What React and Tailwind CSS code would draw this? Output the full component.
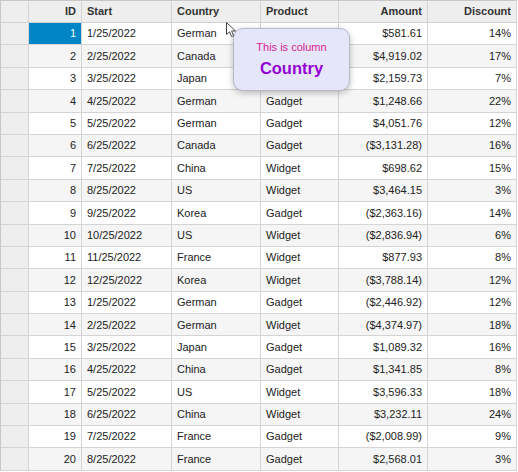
import React from "react";

// product is hidden under the tooltip for the first three rows
const rows = [
  [1, "1/25/2022", "German", "", "$581.61", "14%"],
  [2, "2/25/2022", "Canada", "", "$4,919.02", "17%"],
  [3, "3/25/2022", "Japan", "", "$2,159.73", "7%"],
  [4, "4/25/2022", "German", "Gadget", "$1,248.66", "22%"],
  [5, "5/25/2022", "German", "Gadget", "$4,051.76", "12%"],
  [6, "6/25/2022", "Canada", "Gadget", "($3,131.28)", "16%"],
  [7, "7/25/2022", "China", "Widget", "$698.62", "15%"],
  [8, "8/25/2022", "US", "Widget", "$3,464.15", "3%"],
  [9, "9/25/2022", "Korea", "Gadget", "($2,363.16)", "14%"],
  [10, "10/25/2022", "US", "Widget", "($2,836.94)", "6%"],
  [11, "11/25/2022", "France", "Widget", "$877.93", "8%"],
  [12, "12/25/2022", "Korea", "Widget", "($3,788.14)", "12%"],
  [13, "1/25/2022", "German", "Gadget", "($2,446.92)", "12%"],
  [14, "2/25/2022", "German", "Widget", "($4,374.97)", "18%"],
  [15, "3/25/2022", "Japan", "Gadget", "$1,089.32", "16%"],
  [16, "4/25/2022", "China", "Gadget", "$1,341.85", "8%"],
  [17, "5/25/2022", "US", "Widget", "$3,596.33", "18%"],
  [18, "6/25/2022", "China", "Widget", "$3,232.11", "24%"],
  [19, "7/25/2022", "France", "Gadget", "($2,008.99)", "9%"],
  [20, "8/25/2022", "France", "Gadget", "$2,568.01", "3%"],
];

const cell = "h-full flex items-center border-r border-[#d4d4d4] px-[5px] overflow-hidden whitespace-nowrap";

export default function App() {
  return (
    <div className="relative w-[518px] h-[472px] bg-white text-[11px] text-[#222]" style={{ fontFamily: '"Liberation Sans", Arial, sans-serif' }}>
      <div className="w-[517px] border-l border-t border-[#c8c8c8]">
        {/* header */}
        <div className="flex h-[22px] border-b border-[#d0d0d0] bg-[#eeeeee] font-bold text-[#333]">
          <div className={`${cell} w-[28px]`}></div>
          <div className={`${cell} w-[53px] justify-end`}>ID</div>
          <div className={`${cell} w-[90px]`}>Start</div>
          <div className={`${cell} w-[89px]`}>Country</div>
          <div className={`${cell} w-[78px]`}>Product</div>
          <div className={`${cell} w-[89px] justify-end`}>Amount</div>
          <div className={`${cell} w-[89px] justify-end border-[#c8c8c8]`}>Discount</div>
        </div>
        {rows.map((r, i) => (
          <div
            key={r[0]}
            className={`flex h-[22.4px] border-b border-[#d4d4d4] ${i % 2 ? "bg-[#f5f5f5]" : "bg-white"}`}
          >
            <div className={`${cell} w-[28px] bg-[#eeeeee]`}></div>
            <div className={`${cell} w-[53px] justify-end ${i === 0 ? "bg-[#0085c7] text-white" : ""}`}>{r[0]}</div>
            <div className={`${cell} w-[90px]`}>{r[1]}</div>
            <div className={`${cell} w-[89px]`}>{r[2]}</div>
            <div className={`${cell} w-[78px]`}>{r[3]}</div>
            <div className={`${cell} w-[89px] justify-end`}>{r[4]}</div>
            <div className={`${cell} w-[89px] justify-end border-[#c8c8c8]`}>{r[5]}</div>
          </div>
        ))}
      </div>

      {/* tooltip */}
      <div className="absolute left-[233px] top-[28px] w-[117px] h-[63px] rounded-[10px] border border-[#b8b8c8] bg-[#e6e6fa] shadow-[0_2px_6px_rgba(0,0,0,0.25)] flex flex-col items-center justify-center">
        <div className="text-[11px] text-[#d6248e] leading-none">This is column</div>
        <div className="text-[16.5px] font-bold text-[#9400d3] leading-none mt-[7px]">Country</div>
      </div>

      {/* mouse cursor */}
      <svg className="absolute left-[226px] top-[22px]" width="11" height="16" viewBox="0 0 11 16">
        <path d="M0.5 0.5 L0.5 12.5 L3.5 9.8 L5.6 14.6 L7.6 13.7 L5.6 9 L9.6 9 Z" fill="white" stroke="#444" strokeWidth="1" strokeLinejoin="round" />
      </svg>
    </div>
  );
}
